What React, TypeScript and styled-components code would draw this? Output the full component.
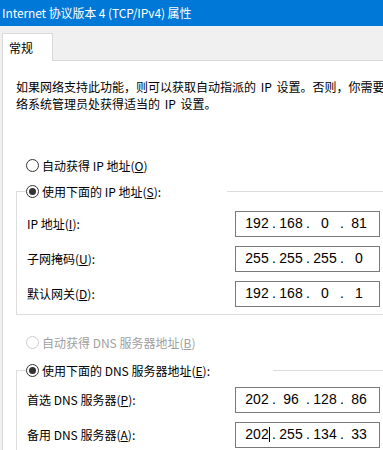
import React from 'react';
import styled, { createGlobalStyle } from 'styled-components';

const GlobalStyle = createGlobalStyle`
  html, body { margin: 0; padding: 0; background: #f0f0f0; overflow: hidden; }
  body {
    font-family: "Noto Sans CJK SC", "Noto Sans", sans-serif;
    font-size: 12px;
    color: #000;
  }
`;

const Window = styled.div`
  width: 410px;
  height: 450px;
  background: #f0f0f0;
  display: flex;
  flex-direction: column;
`;

const TitleBar = styled.div`
  flex: none;
  height: 26px;
  background: #0078d7;
  color: #fff;
  font-size: 12px;
  line-height: 26px;
  padding-left: 2px;
  white-space: nowrap;
  letter-spacing: -0.1px;
`;

const TabStrip = styled.div`
  flex: none;
  height: 34px;
  display: flex;
  align-items: flex-end;
  padding-left: 2px;
`;

const Tab = styled.div`
  position: relative;
  z-index: 1;
  box-sizing: border-box;
  width: 51px;
  height: 28px;
  margin-bottom: -1px;
  padding: 6px 0 0 6px;
  background: #fff;
  border: 1px solid #d9d9d9;
  border-bottom: none;
  line-height: 16px;
`;

const Panel = styled.div`
  flex: 1;
  margin-left: 2px;
  background: #fff;
  border: 1px solid #d9d9d9;
  padding: 17px 0 0 13px;
`;

const Description = styled.div`
  line-height: 17px;
  white-space: nowrap;
`;

const Latin = styled.span`
  padding: 0 2px;
`;

const RadioRow = styled.label<{ $disabled?: boolean; $top?: number }>`
  display: flex;
  align-items: center;
  height: 20px;
  margin-top: ${p => p.$top ?? 0}px;
  margin-left: 10px;
  gap: 3px;
  white-space: nowrap;
  color: ${p => (p.$disabled ? '#a0a0a0' : '#000')};
`;

const Circle = styled.span<{ $checked?: boolean; $disabled?: boolean }>`
  box-sizing: border-box;
  width: 13px;
  height: 13px;
  border-radius: 50%;
  border: 1px solid ${p => (p.$disabled ? '#cccccc' : '#333333')};
  background: #fff;
  display: flex;
  align-items: center;
  justify-content: center;
  flex: none;
  &::after {
    content: '';
    display: ${p => (p.$checked ? 'block' : 'none')};
    width: 7px;
    height: 7px;
    border-radius: 50%;
    background: #333;
  }
`;

const Group = styled.fieldset<{ $top: number; $padTop: number; $padBottom: number }>`
  box-sizing: border-box;
  width: 378px;
  margin: ${p => p.$top}px 0 0 0;
  padding: ${p => p.$padTop}px 0 ${p => p.$padBottom}px 10px;
  border: 1px solid #dcdcdc;
  min-width: 0;
`;

const Legend = styled.legend<{ $width: number }>`
  box-sizing: border-box;
  width: ${p => p.$width}px;
  height: 20px;
  padding: 0;
  margin-left: -1px;
  display: flex;
  align-items: center;
  gap: 3px;
  white-space: nowrap;
`;

const Rows = styled.div`
  display: grid;
  grid-template-columns: 208px 145px;
  row-gap: 9px;
  align-items: center;
`;

const FieldLabel = styled.span`
  white-space: nowrap;
  line-height: 26px;
`;

const IpBox = styled.div`
  box-sizing: border-box;
  width: 145px;
  height: 26px;
  border: 1px solid #7a7a7a;
  padding: 0 0 2px 8px;
  display: flex;
  align-items: center;
  font-family: "Liberation Sans", Arial, sans-serif;
  font-size: 14px;
  color: #000;
  background: #fff;
`;

const Octet = styled.span`
  width: 26px;
  text-align: center;
  white-space: nowrap;
`;

const Dot = styled.span`
  width: 8px;
  text-align: center;
`;

const Caret = styled.span`
  display: inline-block;
  width: 1px;
  height: 15px;
  margin-right: -1px;
  background: #000;
  vertical-align: -3px;
`;

function IpAddress({ value, caret }: { value: string; caret?: boolean }) {
  const parts = value.split('.');
  return (
    <IpBox>
      {parts.map((p, i) => (
        <React.Fragment key={i}>
          {i > 0 && <Dot>.</Dot>}
          <Octet>
            {p}
            {caret && i === 0 && <Caret />}
          </Octet>
        </React.Fragment>
      ))}
    </IpBox>
  );
}

export default function App() {
  return (
    <>
      <GlobalStyle />
      <Window>
        <TitleBar>Internet 协议版本 4 (TCP/IPv4) 属性</TitleBar>
        <TabStrip>
          <Tab>常规</Tab>
        </TabStrip>
        <Panel>
          <Description>
            如果网络支持此功能，则可以获取自动指派的<Latin> IP </Latin>设置。否则，你需要
            <br />
            络系统管理员处获得适当的<Latin> IP </Latin>设置。
          </Description>

          <RadioRow $top={43}>
            <Circle />
            <span>
              自动获得 IP 地址(<u>O</u>)
            </span>
          </RadioRow>

          <Group $top={6} $padTop={10} $padBottom={7}>
            <Legend $width={201}>
              <Circle $checked />
              <span>
                使用下面的 IP 地址(<u>S</u>):
              </span>
            </Legend>
            <Rows>
              <FieldLabel>
                IP 地址(<u>I</u>):
              </FieldLabel>
              <IpAddress value="192.168.0.81" />
              <FieldLabel>
                子网掩码(<u>U</u>):
              </FieldLabel>
              <IpAddress value="255.255.255.0" />
              <FieldLabel>
                默认网关(<u>D</u>):
              </FieldLabel>
              <IpAddress value="192.168.0.1" />
            </Rows>
          </Group>

          <RadioRow $top={17} $disabled>
            <Circle $disabled />
            <span>
              自动获得 DNS 服务器地址(<u>B</u>)
            </span>
          </RadioRow>

          <Group $top={8} $padTop={7} $padBottom={9}>
            <Legend $width={247}>
              <Circle $checked />
              <span>
                使用下面的 DNS 服务器地址(<u>E</u>):
              </span>
            </Legend>
            <Rows>
              <FieldLabel>
                首选 DNS 服务器(<u>P</u>):
              </FieldLabel>
              <IpAddress value="202.96.128.86" />
              <FieldLabel>
                备用 DNS 服务器(<u>A</u>):
              </FieldLabel>
              <IpAddress value="202.255.134.33" caret />
            </Rows>
          </Group>
        </Panel>
      </Window>
    </>
  );
}
